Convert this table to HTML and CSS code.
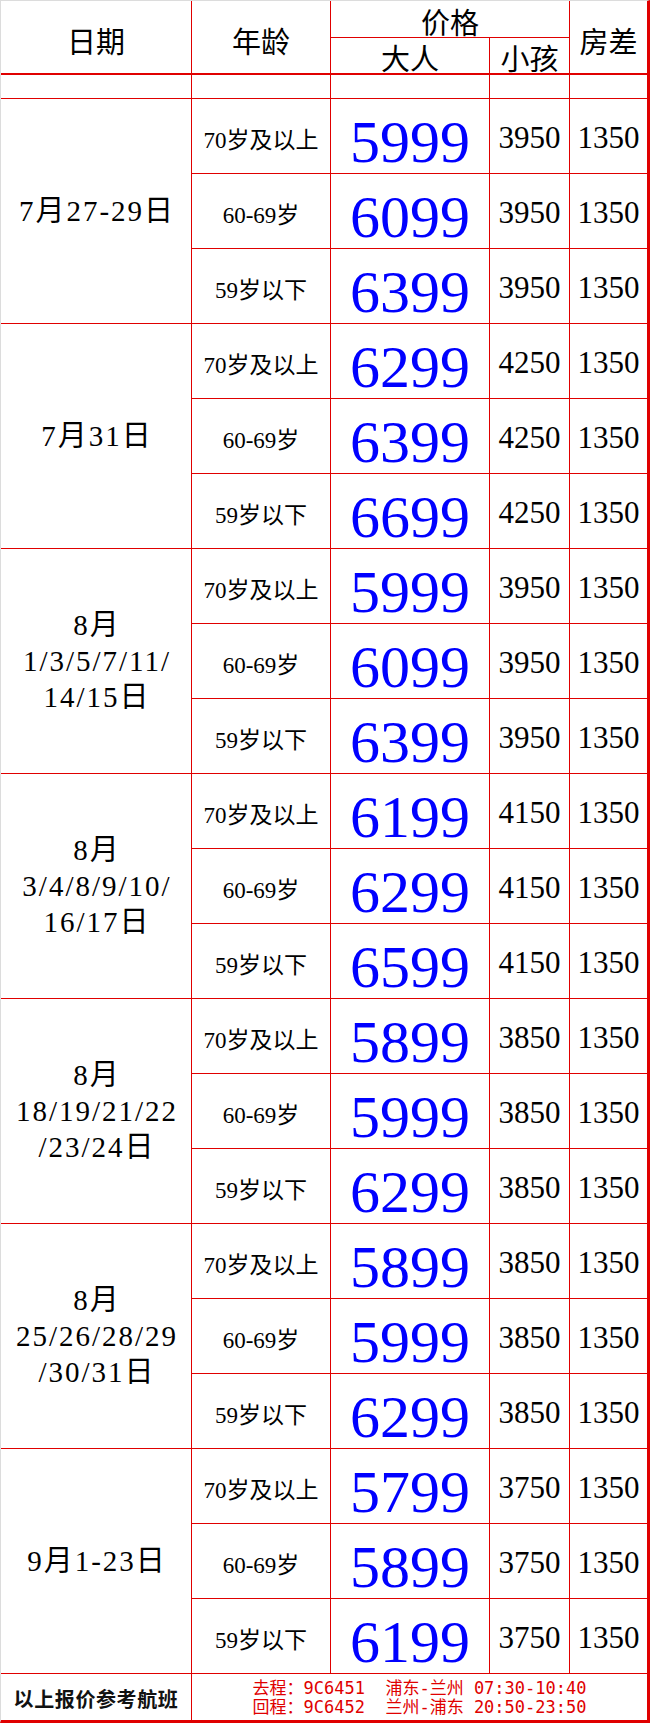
FILE: index.html
```html
<!DOCTYPE html>
<html lang="zh-CN">
<head>
<meta charset="utf-8">
<title>价格表</title>
<link rel="stylesheet" href="styles.css">
</head>
<body>
<div class="sheet">
  <div class="cell head span-r2 head-end">日期</div>
  <div class="cell head span-r2 head-end">年龄</div>
  <div class="cell head span-c2 head-top">价格</div>
  <div class="cell head span-r2 head-end">房差</div>
  <div class="cell head head-end head-sub">大人</div>
  <div class="cell head head-end head-sub">小孩</div>

  <div class="cell"></div><div class="cell"></div><div class="cell"></div><div class="cell"></div><div class="cell"></div>

  <div class="cell date span-r3">7月27-29日</div>
  <div class="cell age">70岁及以上</div><div class="cell adult">5999</div><div class="cell num">3950</div><div class="cell num">1350</div>
  <div class="cell age">60-69岁</div><div class="cell adult">6099</div><div class="cell num">3950</div><div class="cell num">1350</div>
  <div class="cell age">59岁以下</div><div class="cell adult">6399</div><div class="cell num">3950</div><div class="cell num">1350</div>

  <div class="cell date span-r3">7月31日</div>
  <div class="cell age">70岁及以上</div><div class="cell adult">6299</div><div class="cell num">4250</div><div class="cell num">1350</div>
  <div class="cell age">60-69岁</div><div class="cell adult">6399</div><div class="cell num">4250</div><div class="cell num">1350</div>
  <div class="cell age">59岁以下</div><div class="cell adult">6699</div><div class="cell num">4250</div><div class="cell num">1350</div>

  <div class="cell date span-r3">8月<br>1/3/5/7/11/<br>14/15日</div>
  <div class="cell age">70岁及以上</div><div class="cell adult">5999</div><div class="cell num">3950</div><div class="cell num">1350</div>
  <div class="cell age">60-69岁</div><div class="cell adult">6099</div><div class="cell num">3950</div><div class="cell num">1350</div>
  <div class="cell age">59岁以下</div><div class="cell adult">6399</div><div class="cell num">3950</div><div class="cell num">1350</div>

  <div class="cell date span-r3">8月<br>3/4/8/9/10/<br>16/17日</div>
  <div class="cell age">70岁及以上</div><div class="cell adult">6199</div><div class="cell num">4150</div><div class="cell num">1350</div>
  <div class="cell age">60-69岁</div><div class="cell adult">6299</div><div class="cell num">4150</div><div class="cell num">1350</div>
  <div class="cell age">59岁以下</div><div class="cell adult">6599</div><div class="cell num">4150</div><div class="cell num">1350</div>

  <div class="cell date span-r3">8月<br>18/19/21/22<br>/23/24日</div>
  <div class="cell age">70岁及以上</div><div class="cell adult">5899</div><div class="cell num">3850</div><div class="cell num">1350</div>
  <div class="cell age">60-69岁</div><div class="cell adult">5999</div><div class="cell num">3850</div><div class="cell num">1350</div>
  <div class="cell age">59岁以下</div><div class="cell adult">6299</div><div class="cell num">3850</div><div class="cell num">1350</div>

  <div class="cell date span-r3">8月<br>25/26/28/29<br>/30/31日</div>
  <div class="cell age">70岁及以上</div><div class="cell adult">5899</div><div class="cell num">3850</div><div class="cell num">1350</div>
  <div class="cell age">60-69岁</div><div class="cell adult">5999</div><div class="cell num">3850</div><div class="cell num">1350</div>
  <div class="cell age">59岁以下</div><div class="cell adult">6299</div><div class="cell num">3850</div><div class="cell num">1350</div>

  <div class="cell date span-r3">9月1-23日</div>
  <div class="cell age">70岁及以上</div><div class="cell adult">5799</div><div class="cell num">3750</div><div class="cell num">1350</div>
  <div class="cell age">60-69岁</div><div class="cell adult">5899</div><div class="cell num">3750</div><div class="cell num">1350</div>
  <div class="cell age">59岁以下</div><div class="cell adult">6199</div><div class="cell num">3750</div><div class="cell num">1350</div>

  <div class="cell note">以上报价参考航班</div>
  <div class="cell flights span-c4"><div class="flight-lines">去程：9C6451  浦东-兰州 07:30-10:40
回程：9C6452  兰州-浦东 20:50-23:50</div></div>
</div>
</body>
</html>
```
FILE: styles.css
```css
html, body {
  margin: 0;
  padding: 0;
  background: #ffffff;
}

.sheet {
  width: 650px;
  box-sizing: border-box;
  display: grid;
  grid-template-columns: 190px 138px 158px 79px 77px;
  grid-template-rows: 36px 36px 23px repeat(21, 74px) 46px;
  gap: 1px;
  background: #e00000;
  background-clip: padding-box;
  border-top: 1px solid #dcdcdc;
  border-left: 1px solid #dcdcdc;
  border-right: 3px solid #e00000;
  border-bottom: 3px solid #e00000;
}

.cell {
  background: #ffffff;
  display: flex;
  align-items: center;
  justify-content: center;
  box-sizing: border-box;
  color: #000;
  font-family: "Liberation Serif", "Noto Sans CJK SC", serif;
  text-align: center;
}

.span-r2 { grid-row: span 2; }
.span-r3 { grid-row: span 3; }
.span-c2 { grid-column: span 2; }
.span-c4 { grid-column: span 4; }

.head {
  font-family: "Noto Sans CJK SC", sans-serif;
  font-size: 29px;
  line-height: 1;
}

.head-end {
  border-bottom: 1px solid #e00000;
  padding-top: 6px;
}

.head-top {
  padding-top: 4px;
}

.head-sub {
  padding-top: 4px;
}

.date {
  font-size: 29px;
  line-height: 36px;
  letter-spacing: 2px;
  padding-left: 2px;
}

.age {
  font-size: 23px;
  padding-top: 3px;
}

.adult {
  font-size: 60px;
  color: #0000ff;
  padding-top: 12px;
}

.num {
  font-size: 31px;
  padding-top: 4px;
}

.note {
  font-family: "Noto Sans CJK SC", sans-serif;
  font-weight: 700;
  font-size: 20px;
  letter-spacing: 0.6px;
  color: #111;
  padding-top: 2px;
}

.flights {
  color: #e00000;
}

.flight-lines {
  font-family: "DejaVu Sans Mono", "Noto Sans CJK SC", monospace;
  font-size: 17px;
  line-height: 19px;
  white-space: pre;
  text-align: left;
  padding-top: 2px;
}
```
